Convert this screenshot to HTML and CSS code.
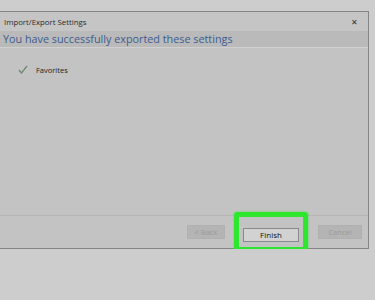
FILE: index.html
```html
<!DOCTYPE html>
<html>
    <head>
        <meta name="viewport" content="width=device-width, initial-scale=1">
        <link rel="stylesheet" href="styles.css">
    </head>
    <body>
        <div class="dialog">
            <div class="titlebar">
                <span class="title">Import/Export Settings</span>
                <span class="close">&#x2715;</span>
            </div>
            <div class="heading">You have successfully exported these settings</div>
            <div class="content">
                <div class="item">
                    <svg class="check" width="10" height="9" viewBox="0 0 10 9">
                        <path d="M1 5 L3.5 8 L9 1" fill="none" stroke="#6f8a6f" stroke-width="1.3"/>
                    </svg>
                    <span>Favorites</span>
                </div>
            </div>
            <div class="footer">
                <button class="btn disabled">&lt; Back</button>
                <div class="highlight">
                    <button class="btn finish">Finish</button>
                </div>
                <button class="btn disabled">Cancel</button>
            </div>
        </div>
    </body>
</html>
```

FILE: styles.css
```css
html, body { margin: 0; padding: 0; background-color: #cdcdcd; font-family: "Open Sans", "Noto Sans", sans-serif; }
.dialog {
    margin-top: 11px;
    width: 369px;
    height: 238px;
    box-sizing: border-box;
    border: 1px solid #858585;
    border-left: none;
    background-color: #c3c3c3;
    display: flex;
    flex-direction: column;
}
.titlebar {
    height: 19px;
    display: flex;
    align-items: center;
    justify-content: space-between;
    padding: 0 10px 0 4px;
    background-color: #c5c5c5;
    font-size: 7.8px;
    color: #2a2a2a;
}
.close { font-size: 8px; color: #333; }
.heading {
    height: 16px;
    line-height: 16px;
    padding-left: 3px;
    background-color: #bababa;
    color: #3c5c90;
    font-size: 10.8px;
    border-bottom: 1px solid #d0d0d0;
}
.content { flex: 1; padding: 17px 0 0 18px; border-bottom: 1px solid #b5b5b5; }
.item { display: flex; align-items: center; gap: 8px; font-size: 7.5px; color: #222; }
.check { margin-top: -2px; }
.footer {
    height: 32px;
    display: flex;
    align-items: center;
    padding-left: 187px;
}
.btn {
    height: 14px;
    padding: 0;
    font-family: inherit;
    font-size: 7.5px;
    border: 1px solid #b0b0b0;
    background-color: #b4b4b4;
    color: #9a9a9a;
}
.btn.disabled:first-child { width: 38px; }
.btn.disabled:last-child { width: 44px; margin-left: 10px; }
.highlight {
    margin-left: 9px;
    padding: 4px;
    border: 5px solid #2ee62e;
    border-radius: 3px;
    box-shadow: 0 0 2px #39f039;
}
.btn.finish {
    width: 56px;
    background-color: #d2d2d2;
    border-color: #8a8a8a;
    color: #111;
    font-size: 8px;
}
```
